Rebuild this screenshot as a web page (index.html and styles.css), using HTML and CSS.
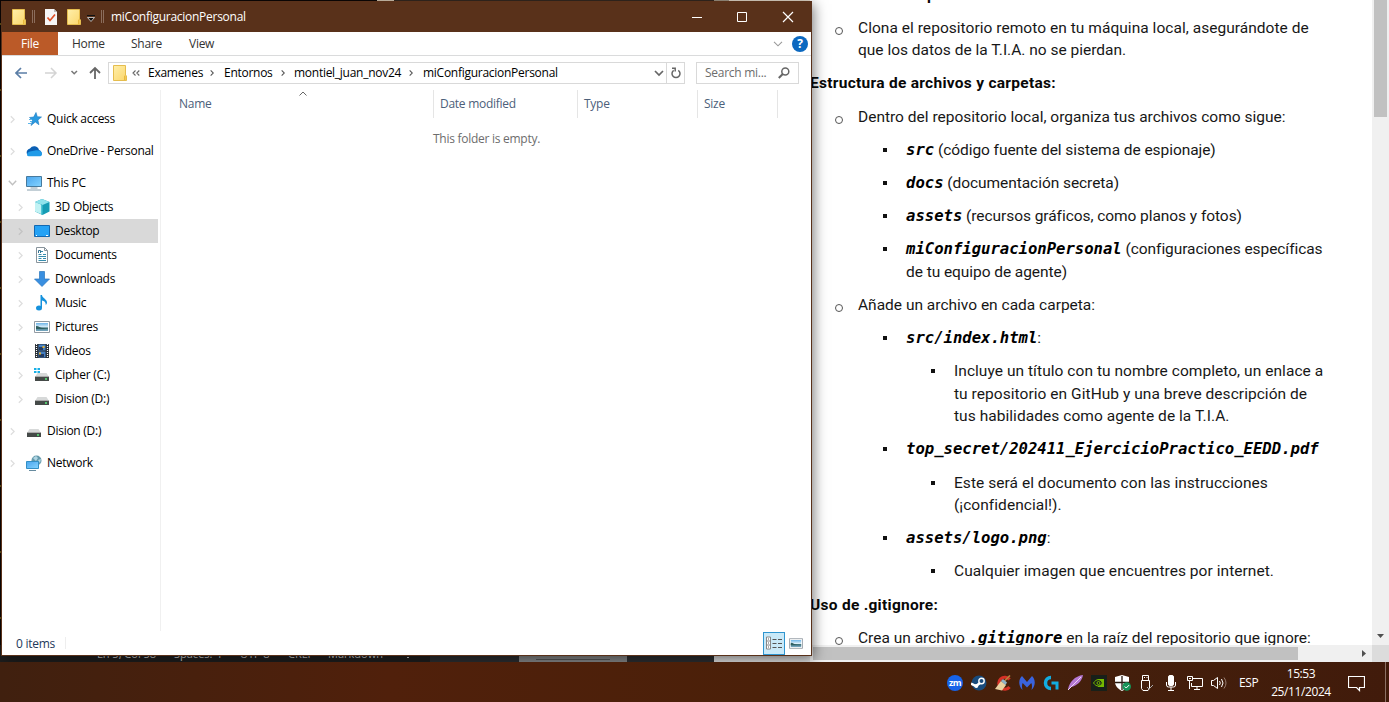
FILE: index.html
```html
<!DOCTYPE html>
<html lang="es">
<head>
<meta charset="utf-8">
<title>miConfiguracionPersonal</title>
<link rel="stylesheet" href="styles.css">
</head>
<body>
<svg class="defs" width="0" height="0">
  <defs>
    <linearGradient id="gFolder" x1="0" y1="0" x2="1" y2="1"><stop offset="0" stop-color="#ffefaa"/><stop offset="1" stop-color="#fbd66b"/></linearGradient>
    <linearGradient id="gScreen" x1="0" y1="0" x2="1" y2="1"><stop offset="0" stop-color="#4aa5ee"/><stop offset="1" stop-color="#85d4ff"/></linearGradient>
    <linearGradient id="gSky" x1="0" y1="0" x2="0" y2="1"><stop offset="0" stop-color="#6eb5e8"/><stop offset=".5" stop-color="#dceffa"/><stop offset=".6" stop-color="#4a7e88"/><stop offset="1" stop-color="#79a9c4"/></linearGradient>
    <symbol id="folder" viewBox="0 0 14 16"><path d="M.5 .5H12.5V10L13.5 11V15.5H.5Z" fill="url(#gFolder)" stroke="#e5bd4e"/><path d="M11 15V11l1.500-1v5z" fill="#e9b93d"/></symbol>
    <symbol id="chev" viewBox="0 0 6 10"><path d="M1 1l4 4-4 4" fill="none" stroke="currentColor" stroke-width="1.6"/></symbol>
    <symbol id="drive" viewBox="0 0 16 16"><path d="M3.500 6h9L15 10H1z" fill="#d7d9d9"/><path d="M1 10h14v4H1z" fill="#454a48"/><path d="M1 9.500h14" stroke="#aaa"/><circle cx="12" cy="12" r=".9" fill="#5dff82"/></symbol>
    <symbol id="picture" viewBox="0 0 16 12"><path d="M.5.5h15v11H.5z" fill="#fff" stroke="#929ba3"/><path d="M2 2h12v8H2z" fill="url(#gSky)"/><path d="M2 5c3 0 4 2 7 2l5 .5V8H2z" fill="#2f5f60"/></symbol>
  </defs>
</svg>
<div class="desktop">
  <div class="edge-top"><i class="e1"></i><i class="e2"></i><i class="e3"></i><i class="e4"></i><i class="e5"></i></div>
  <div class="edge-left"></div>
  <div class="strip">
    <div class="editor-status"><span class="s1">Ln 5, Col 58</span><span class="s2">Spaces: 4</span><span class="s3">UTF-8</span><span class="s4">CRLF</span><span class="s5">Markdown</span><svg width="10" height="12" viewBox="0 0 10 12"><path d="M1 9h8L8 7V4a3 3 0 0 0-6 0v3zM4 10h2v1H4z" fill="#ccc"/></svg></div>
    <div class="dark a"></div><div class="thumb"><i></i></div><div class="dark b"></div><div class="light"></div>
  </div>

  <section class="doc">
    <div class="page">
      <p class="h">Clonación del repositorio:</p>
      <p class="l1"><span class="w1">Clona el repositorio remoto en tu máquina local, asegurándote de</span><br>que los datos de la T.I.A. no se pierdan.</p>
      <p class="h">Estructura de archivos y carpetas:</p>
      <p class="l1">Dentro del repositorio local, organiza tus archivos como sigue:</p>
      <p class="l2"><b>src</b> (código fuente del sistema de espionaje)</p>
      <p class="l2"><b>docs</b> (documentación secreta)</p>
      <p class="l2"><b>assets</b> (recursos gráficos, como planos y fotos)</p>
      <p class="l2"><b>miConfiguracionPersonal</b> (configuraciones específicas<br>de tu equipo de agente)</p>
      <p class="l1">Añade un archivo en cada carpeta:</p>
      <p class="l2"><b>src/index.html</b>:</p>
      <p class="l3">Incluye un título con tu nombre completo, un enlace a<br>tu repositorio en GitHub y una breve descripción de<br>tus habilidades como agente de la T.I.A.</p>
      <p class="l2"><b>top_secret/202411_EjercicioPractico_EEDD.pdf</b></p>
      <p class="l3">Este será el documento con las instrucciones<br>(¡confidencial!).</p>
      <p class="l2"><b>assets/logo.png</b>:</p>
      <p class="l3">Cualquier imagen que encuentres por internet.</p>
      <p class="h">Uso de .gitignore:</p>
      <p class="l1">Crea un archivo <b>.gitignore</b> en la raíz del repositorio que ignore:</p>
    </div>
    <div class="vbar"><i></i><svg width="7" height="4" viewBox="0 0 7 4"><path d="M0 0h7L3.500 4z" fill="#505050"/></svg></div>
    <div class="hbar"><i></i><svg width="4" height="7" viewBox="0 0 4 7"><path d="M0 0v7l4-3.500z" fill="#505050"/></svg></div>
    <div class="corner"></div>
  </section>

  <section class="win">
    <header class="title">
      <svg class="f1" width="14" height="16"><use href="#folder"/></svg>
      <i class="tsep"></i>
      <svg class="chk" width="12" height="16" viewBox="0 0 12 16"><path d="M0 0h9l3 3v13H0z" fill="#f6f6f6"/><path d="M9 0v3h3" fill="#bbb"/><path d="M2.500 8.500l2.500 3 5-6" fill="none" stroke="#df5127" stroke-width="1.7"/></svg>
      <svg class="f2" width="14" height="16"><use href="#folder"/></svg>
      <svg class="dd" width="8" height="7" viewBox="0 0 8 7"><path d="M0 .5h8" stroke="#111"/><path d="M.5 2.500h7L4 6.500z" fill="#111" stroke="#ddd" stroke-width=".8"/></svg>
      <i class="tsep t2"></i>
      <span class="tname">miConfiguracionPersonal</span>
      <svg class="wctl" width="106" height="12" viewBox="0 0 106 12" fill="none" stroke="#fff"><path d="M0 6.500h10M45.500 1.500h9v9h-9z"/><path d="M91 1l10 10M101 1l-10 10" stroke-width="1.2"/></svg>
    </header>
    <nav class="tabs">
      <span class="file">File</span><span class="m1">Home</span><span class="m2">Share</span><span class="m3">View</span>
      <svg class="tdown" width="10" height="6" viewBox="0 0 10 6"><path d="M1 .8l4 4 4-4" fill="none" stroke="#999" stroke-width="1.1"/></svg>
      <span class="help">?</span>
    </nav>
    <div class="addr">
      <svg class="arrows" width="87" height="14" viewBox="0 0 87 14" fill="none"><path d="M12 7H1.500M6 2L1 7l5 5" stroke="#5b7ea6" stroke-width="1.7"/><path d="M30 7h10.500M36 2l5 5-5 5" stroke="#d4d4d4" stroke-width="1.5"/><path d="M56.500 5l2.700 2.700L62 5" stroke="#777" stroke-width="1.5"/><path d="M80 13V2M75 7l5-5 5 5" stroke="#666" stroke-width="1.8"/></svg>
      <div class="path">
        <svg width="14" height="16"><use href="#folder"/></svg>
        <svg class="ll" width="8" height="6" viewBox="0 0 8 6"><path d="M3.500.5L1 3l2.500 2.500M7.300.5L4.800 3l2.500 2.500" fill="none" stroke="#666" stroke-width="1.1"/></svg>
        <span class="c1">Examenes</span><svg class="cv" width="4" height="8"><use href="#chev"/></svg>
        <span class="c2">Entornos</span><svg class="cv" width="4" height="8"><use href="#chev"/></svg>
        <span class="c3">montiel_juan_nov24</span><svg class="cv" width="4" height="8"><use href="#chev"/></svg>
        <span class="c4">miConfiguracionPersonal</span>
        <svg class="pd" width="10" height="7" viewBox="0 0 10 7"><path d="M1 1l4 4 4-4" fill="none" stroke="#666" stroke-width="1.7"/></svg>
        <span class="refresh"><svg width="10" height="12" viewBox="0 0 10 12"><path d="M7.300 3.300A4 4 0 1 1 2.700 3.300M1 1.300h3.200v3.200" fill="none" stroke="#666" stroke-width="1.5"/></svg></span>
      </div>
      <div class="search"><span>Search mi...</span><svg width="12" height="12" viewBox="0 0 12 12" fill="none" stroke="#666"><circle cx="7.300" cy="4.500" r="3.500" stroke-width="1.5"/><path d="M4.800 7L.8 11" stroke-width="2"/></svg></div>
    </div>
    <div class="body">
      <aside class="tree">
        <div class="r top"><svg class="a" width="5" height="9"><use href="#chev"/></svg><svg class="ic" viewBox="0 0 16 16"><path d="M10 1.500l1.300 4.200 4.200.3-3.600 3 1 4.700L9.300 11 5 14.500l1.500-5L3.500 6.500l4.200-.5z" fill="#2a9ae0" stroke="#1b79c0" stroke-width=".6"/><path d="M3 8.500h3M4 10.500h2M2 12.500h3" stroke="#5ab5ea"/></svg><span>Quick access</span></div>
        <div class="r top"><svg class="a" width="5" height="9"><use href="#chev"/></svg><svg class="ic" viewBox="0 0 16 16"><path d="M1 11a4 4 0 0 1 3-5.500 5 5 0 0 1 9 1.500 3.500 3.500 0 0 1 2 5.500H4z" fill="#0a5fb4"/><path d="M1 12c0-2 1-3 3-3.500L9 7.500c4-1 7 1 7 3.500 0 1.800-1 2.300-3 2.300H4C2 13.300 1 13 1 12z" fill="#209be8"/></svg><span>OneDrive - Personal</span></div>
        <div class="r top"><svg class="a dn" width="9" height="6" viewBox="0 0 9 6"><path d="M.8.8l3.700 4 3.700-4" fill="none" stroke="#c0c0c0" stroke-width="1.4"/></svg><svg class="ic" viewBox="0 0 16 16"><path d="M.5 1.500h15v10H.5z" fill="url(#gScreen)" stroke="#477a9d"/><path d="M4.500 13h7M1 15h14" stroke="#88a0ae"/></svg><span>This PC</span></div>
        <div class="r"><svg class="a" width="5" height="9"><use href="#chev"/></svg><svg class="ic" viewBox="0 0 16 16"><path d="M1 3l7-3 7.500 3v9.500L8.500 16 1 12.500z" fill="#159cb4"/><path d="M1 3l7-3 7.500 3-7 3z" fill="#8fe3ec"/><path d="M1 3l6 2.500V15l-6-2.500z" fill="#c1f2f4"/><path d="M7 5.500l1.500.5v10L7 15z" fill="#4fc6d6"/></svg><span>3D Objects</span></div>
        <div class="r sel"><svg class="a" width="5" height="9"><use href="#chev"/></svg><svg class="ic" viewBox="0 0 16 16"><path d="M.5 2.500h15v11H.5z" fill="#25a2f5" stroke="#1368b1"/><path d="M2 12.500h1M12 12.500h2" stroke="#fff"/></svg><span>Desktop</span></div>
        <div class="r"><svg class="a" width="5" height="9"><use href="#chev"/></svg><svg class="ic" viewBox="0 0 16 16"><path d="M2.500.5h8l3 3v12h-11z" fill="#fff" stroke="#89949c"/><path d="M10.500.5v3h3" fill="none" stroke="#89949c"/><path d="M7 4.500h2M4.500 7.500h3M9 7.500h3M4.500 9.500H12M4.500 11.500h3M9 11.500h3M4.500 13.500H12" stroke="#368cad"/><path d="M4.500 6V3.500h2V6" fill="none" stroke="#367493"/></svg><span>Documents</span></div>
        <div class="r"><svg class="a" width="5" height="9"><use href="#chev"/></svg><svg class="ic" viewBox="0 0 16 16"><path d="M5.500.5h5V8h5L8 15.500.5 8h5z" fill="#398fe0" stroke="#2877bf" stroke-width=".7"/></svg><span>Downloads</span></div>
        <div class="r"><svg class="a" width="5" height="9"><use href="#chev"/></svg><svg class="ic" viewBox="0 0 16 16"><ellipse cx="5" cy="13" rx="3" ry="2.500" fill="#1592dd"/><path d="M6.500 13V0H8c0 3 5 4 5 7.500 0 1-.6 2-1.300 2.500C12 7 10 6 8 5.500V13z" fill="#1592dd"/></svg><span>Music</span></div>
        <div class="r"><svg class="a" width="5" height="9"><use href="#chev"/></svg><svg class="ic pic"><use href="#picture"/></svg><span>Pictures</span></div>
        <div class="r"><svg class="a" width="5" height="9"><use href="#chev"/></svg><svg class="ic" viewBox="0 0 16 16"><path d="M1 1h14v14H1z" fill="#292f35"/><path d="M4.500 1.500h7v6h-7zM4.500 8.500h7v6h-7z" fill="#447fc2"/><path d="M5 4h4v3H5zM5 11h5v3H5z" fill="#233a60"/><path d="M8.500 3h2v2h-2zM5 9.500h2v2H5z" fill="#e3b438"/><path d="M2.500 1v14M13.500 1v14" stroke="#fff" stroke-width="1.200" stroke-dasharray="1 1"/></svg><span>Videos</span></div>
        <div class="r"><svg class="a" width="5" height="9"><use href="#chev"/></svg><svg class="ic" viewBox="0 0 16 16"><use href="#drive"/><path d="M0 1h2.500v2H0zM3.500 1H6v2H3.500zM0 4h2.500v2H0zM3.500 4H6v2H3.500z" fill="#18afe6"/></svg><span>Cipher (C:)</span></div>
        <div class="r"><svg class="a" width="5" height="9"><use href="#chev"/></svg><svg class="ic"><use href="#drive"/></svg><span>Dision (D:)</span></div>
        <div class="r top gap"><svg class="a" width="5" height="9"><use href="#chev"/></svg><svg class="ic"><use href="#drive"/></svg><span>Dision (D:)</span></div>
        <div class="r top gap"><svg class="a" width="5" height="9"><use href="#chev"/></svg><svg class="ic" viewBox="0 0 16 16"><circle cx="10.500" cy="5.500" r="5" fill="#659aac"/><path d="M7 3l3-2 2 2-2 3zM12 5l3-1-1 4z" fill="#afd5e3"/><path d="M.5 6.500h12v7H.5z" fill="url(#gScreen)" stroke="#328fc5"/><path d="M3 15.500h7" stroke="#678b9f"/></svg><span>Network</span></div>
      </aside>
      <main class="files">
        <div class="cols"><span class="k1">Name<svg width="8" height="5" viewBox="0 0 8 5"><path d="M.5 4.500L4 1l3.500 3.500" fill="none" stroke="#666"/></svg></span><span class="k2">Date modified</span><span class="k3">Type</span><span class="k4">Size</span></div>
        <p class="empty">This folder is empty.</p>
      </main>
    </div>
    <footer class="status"><span>0 items</span><i></i>
      <div class="v1"><svg width="18" height="14" viewBox="0 0 18 14" fill="none"><path d="M1.500 1h4v12h-4zM1.500 5h4M1.500 9h4" stroke="#888" fill="#fff"/><path d="M7.500 3.500h4M13 3.500h4M7.500 7.500h4M13 7.500h4M7.500 11.500h4M13 11.500h4" stroke="#555"/><path d="M3.500 2.500v1M3.500 6.500v1M3.500 10.500v1" stroke="#555"/></svg></div>
      <svg class="v2" width="14" height="11"><use href="#picture"/></svg>
    </footer>
  </section>

  <footer class="taskbar">
    <div class="tray">
      <span class="zm">zm</span>
      <svg viewBox="0 0 16 16"><circle cx="8" cy="8" r="7.500" fill="#194b7c"/><path d="M0 8.500l5 2.500 4-3" fill="none" stroke="#fff" stroke-width="2.500"/><circle cx="5.300" cy="11" r="2" fill="#fff"/><circle cx="10.500" cy="6" r="2.700" fill="#194b7c" stroke="#fff" stroke-width="1.400"/></svg>
      <svg viewBox="0 0 16 16"><path d="M14.500 4.500A6 6 0 1 0 14.500 12" fill="none" stroke="#d63126" stroke-width="3.200"/><path d="M15 .5L9.500 6" stroke="#b8823c" stroke-width="1.600"/><path d="M6 6l5 4-4 5.500L0 14z" fill="#ead0a0"/><path d="M8 4l4 3.500L10.500 10 6 6z" fill="#8fb2c8"/></svg>
      <svg viewBox="0 0 16 16"><path d="M3.500 15C-1.500 10 0 3.500 3 1l5 6 5-6c3 2.500 4.500 9-.5 14 .7-3 .7-5-.2-7L8 12.500 3.700 8c-.9 2-.9 4-.2 7z" fill="#3a63dd"/></svg>
      <svg viewBox="0 0 16 16"><path d="M8 2.500A5.500 5.500 0 0 0 8 13.500" fill="none" stroke="#12acdf" stroke-width="3.500"/><path d="M8.500 8H14v6.500" fill="none" stroke="#12acdf" stroke-width="3"/></svg>
      <svg viewBox="0 0 16 16"><path d="M1 15C2 7 8 1 16 0c-1 6-6 11-12 12z" fill="#b578d3"/><path d="M1 15L14 2" stroke="#eed4f5"/></svg>
      <svg viewBox="0 0 16 16"><path d="M0 0h16v16H0z" fill="#182019"/><path d="M7 4h6v8H7z" fill="#76b900"/><path d="M2.500 8c3-4.500 6.500-4.500 9 0-2.500 4-6 4-9 0z" fill="#182019" stroke="#76b900" stroke-width="1"/><circle cx="7.500" cy="8" r="1.500" fill="none" stroke="#76b900"/></svg>
      <svg viewBox="0 0 16 16"><path d="M7 0l7 2v5c0 4-3 7-7 9-4-2-7-5-7-9V2z" fill="#fff"/><path d="M7 1v14M0 7.500h14" stroke="#26180f" stroke-width="1.3"/><circle cx="11.700" cy="11.500" r="4.300" fill="#159458"/><path d="M9.700 11.500l1.500 1.500 3-3" fill="none" stroke="#fff"/></svg>
      <svg viewBox="0 0 16 16" fill="none" stroke="#fff"><path d="M3.500 5V.5h6V5M2.500 5.500h8v8l-1.500 2H4L2.500 13.500zM5 2.500h1M7.500 2.500h1"/><path d="M8 12l2 2 4-4" stroke="#aaa"/></svg>
      <svg viewBox="0 0 16 16" fill="none" stroke="#fff"><rect x="5.500" y=".5" width="5" height="10" rx="1.500" fill="#fff"/><path d="M3.500 7v3q0 2 2 2h5q2 0 2-2V7M8 12v3M5 15.500h6"/></svg>
      <svg viewBox="0 0 16 16" fill="none" stroke="#fff"><path d="M5 3.500h10.500v8H4.500V8M7 14.500h6M10 12v2M.5 1.500h5v4h-5zM2.500 6v8M2 3.500h2"/></svg>
      <svg viewBox="0 0 16 16" fill="none" stroke="#fff"><path d="M.5 5.500h2l4-3v11l-4-3h-2zM8.500 6q1.500 2 0 4M10.500 4q3 4 0 8"/><path d="M13 2.500q4 5.500 0 11" stroke="#967c70"/></svg>
    </div>
    <span class="esp">ESP</span>
    <div class="clock"><span>15:53</span><span>25/11/2024</span></div>
    <svg class="note" width="17" height="17" viewBox="0 0 17 17"><path d="M.5 1.500h16v11h-5v3l-3-3h-8z" fill="none" stroke="#fff" stroke-width="1.200"/></svg>
  </footer>
</div>
</body>
</html>
```
FILE: styles.css
```css
* { box-sizing: border-box; }
body { margin: 0; width: 1389px; height: 702px; overflow: hidden; font: 12px/16px "Open Sans", "Noto Sans", sans-serif; color: #111; }
i { display: block; }
svg { display: block; flex: none; }
.defs { position: absolute; }
.desktop { position: relative; width: 1389px; height: 702px; background: #0a0404; overflow: hidden; }

/* Slivers of the windows behind the explorer */
.edge-top { position: absolute; top: 0; left: 0; width: 812px; height: 2px; display: flex; }
.e1 { width: 377px; background: #0c0605; }
.e2 { width: 17px; background: #d8c8b4; }
.e3 { width: 320px; background: #352820; }
.e4 { width: 15px; background: #a09484; }
.e5 { flex: 1; background: #e5dacb; }
.edge-left { position: absolute; top: 0; left: 0; width: 1px; height: 655px; background: repeating-linear-gradient(#0b0504 0 23px, #655416 23px 25px, #0b0504 25px 66px); }
.strip { position: absolute; left: 0; top: 645px; width: 812px; height: 17px; display: flex; background: #1e1e1e; }
.editor-status { width: 430px; display: flex; padding: 2px 0 0 97px; font-size: 11px; line-height: 14px; color: #ccc; white-space: nowrap; }
.s1 { width: 77px; } .s2 { width: 66px; } .s3 { width: 48px; } .s4 { width: 40px; } .s5 { width: 75px; }
.dark { background: #2b2d30; }
.dark.a { width: 89px; } .dark.b { width: 87px; }
.thumb { width: 108px; background: #858687; padding: 14px 17px 0; }
.thumb i { border-top: 1px solid #555; }
.light { flex: 1; background: #dcdcdc; }

/* Document viewer */
.doc { position: absolute; left: 810px; top: 0; width: 579px; height: 662px; display: grid; grid-template: 645px 17px / 562px 17px; background: #fff; }
.page { overflow: hidden; font: 15.5px/22.4px Roboto, "Open Sans", sans-serif; color: #171717; white-space: nowrap; }
.page p { margin: 0 0 10.8px; position: relative; }
.page p:first-child { margin-top: -16.400px; }
.page .h { font-weight: 700; color: #080808; font-size: 15.5px; letter-spacing: .28px; }
.page .l1 { padding-left: 48px; }
.page .l2 { padding-left: 96px; letter-spacing: -.06px; }
.page .l3 { padding-left: 144px; letter-spacing: .05px; }
.page .w1 { letter-spacing: .04px; }
.page p::before { content: ""; position: absolute; }
.page .l1::before { left: 25px; top: 10px; width: 6px; height: 6px; border: 1px solid #555; border-radius: 50%; }
.page .l2::before, .page .l3::before { top: 9px; width: 4px; height: 4px; background: #111; }
.page .l2::before { left: 73px; }
.page .l3::before { left: 121px; }
.page b { font: italic 700 15.6px/20px "DejaVu Sans Mono", monospace; color: #000; letter-spacing: -.01px; }
.vbar { background: #f0f0f0; display: flex; flex-direction: column; align-items: center; justify-content: space-between; padding-bottom: 7px; }
.vbar i { width: 13px; height: 117px; background: #c1c1c1; }
.hbar { background: #f0f0f0; display: flex; align-items: center; justify-content: space-between; padding: 0 6px 0 3px; }
.hbar i { width: 485px; height: 13px; background: #c1c1c1; }
.corner { background: #dcdcdc; }

/* Explorer window */
.win { position: absolute; left: 1px; top: 1px; width: 811px; height: 655px; border: 1px solid #59311a; background: #fff; display: flex; flex-direction: column; box-shadow: 2px 3px 12px rgba(0,0,0,.5); white-space: nowrap; }
.title { height: 31px; margin-top: -1px; background: #59311a; display: flex; align-items: center; padding-left: 10px; color: #fff; }
.tsep { width: 3px; height: 13px; border: solid #8b6d5c; border-width: 0 1px; margin-left: 6px; }
.chk { margin-left: 10px; }
.f2 { margin-left: 10px; }
.dd { margin: 4px 0 0 6px; }
.t2 { margin-left: 6px; }
.tname { margin: 1px 0 0 7px; }
.wctl { margin-left: auto; margin-right: 13px; }
.tabs { height: 24px; display: flex; align-items: center; border-bottom: 1px solid #dadbdc; color: #333; }
.tabs .file { width: 56px; height: 23px; line-height: 24px; background: #bb5a28; color: #fff; text-align: center; align-self: flex-start; }
.m1 { width: 59px; margin-left: 14px; } .m2 { width: 58px; } .m3 { flex: 1; }
.help { width: 16px; height: 16px; border-radius: 50%; background: #0b68c0; color: #fff; font-weight: 700; text-align: center; margin: 0 3px 0 9px; }
.addr { height: 34px; display: flex; align-items: center; padding-left: 13px; }
.path { margin-left: 6px; width: 577px; height: 22px; border: 1px solid #d9d9d9; display: flex; align-items: center; padding-left: 4px; color: #000; }
.path .ll { margin: 0 8px 0 5px; }
.c1 { width: 62px; } .c2 { width: 57px; margin-left: 10px; } .c3 { width: 115px; margin-left: 9px; } .c4 { width: 140px; margin-left: 10px; }
.cv { color: #555; }
.pd { margin-left: auto; }
.refresh { width: 18px; height: 20px; margin-left: 2px; border-left: 1px solid #d9d9d9; display: flex; align-items: center; justify-content: center; }
.search { margin-left: 11px; width: 103px; height: 22px; border: 1px solid #d9d9d9; display: flex; align-items: center; justify-content: space-between; padding: 0 8px; color: #6d6d6d; }
.body { flex: 1; min-height: 0; display: flex; }
.tree { width: 159px; border-right: 1px solid #f0f0f0; padding-top: 17px; color: #000; }
.r { display: flex; align-items: center; height: 24px; width: 156px; padding-left: 16px; }
.r.top { padding-left: 8px; margin-bottom: 8px; }
.r.top:nth-child(3) { margin-bottom: 0; }
.r.gap { margin: 8px 0 0; }
.r.sel { background: #d9d9d9; }
.r .a { width: 5px; color: #dedede; margin-right: 11px; }
.r.sel .a { color: #c3c3c3; }
.r .a.dn { width: 9px; margin: 0 9px 0 -2px; }
.ic { width: 16px; height: 16px; margin-right: 5px; }
.ic.pic { height: 12px; }
.files { flex: 1; }
.cols { height: 28px; display: flex; color: #4c607a; line-height: 28px; }
.cols span { border-right: 1px solid #e5e5e5; position: relative; }
.k1 { width: 273px; padding-left: 18px; } .k2 { width: 144px; padding-left: 6px; } .k3 { width: 120px; padding-left: 6px; } .k4 { width: 80px; padding-left: 6px; }
.k1 svg { position: absolute; left: 138px; top: 1px; }
.empty { margin: 13px 0 0; padding-left: 272px; color: #6d6d6d; }
.status { height: 24px; display: flex; align-items: center; padding-left: 14px; color: #1e395b; }
.status span { padding-top: 2px; }
.status > i { width: 1px; height: 12px; background: #eee; margin-left: 10px; }
.v1 { margin-left: auto; width: 22px; height: 23px; border: 1px solid #3095cf; background: #c9e9f8; display: flex; align-items: center; justify-content: center; }
.v2 { margin: 0 8px 0 4px; }

/* Taskbar */
.taskbar { position: absolute; left: 0; top: 662px; width: 1389px; height: 40px; background: linear-gradient(90deg, #40200f, #50200b 28%, #4b2009 55%, #45200c 75%, #411b0b); display: flex; align-items: center; padding-left: 947px; color: #fff; }
.tray { display: flex; gap: 8px; }
.tray svg { width: 16px; height: 16px; margin-top: 1px; }
.zm { width: 16px; height: 16px; margin-top: 1px; border-radius: 50%; background: #1763e8; font-size: 9px; line-height: 15px; font-weight: 700; text-align: center; letter-spacing: -.5px; }
.esp { margin: 2px 0 0 12px; width: 20px; }
.clock { display: flex; flex-direction: column; align-items: center; width: 62px; margin: 2px 0 0 11px; line-height: 18px; }
.note { margin: 2px 0 0 16px; }
.taskbar::after { content: ""; margin-left: 20px; width: 1px; height: 40px; background: #8b7165; }
.tname, .tabs, .path, .search, .tree, .cols, .empty, .status { letter-spacing: -.27px; }
.clock, .esp { letter-spacing: -.4px; }
```
